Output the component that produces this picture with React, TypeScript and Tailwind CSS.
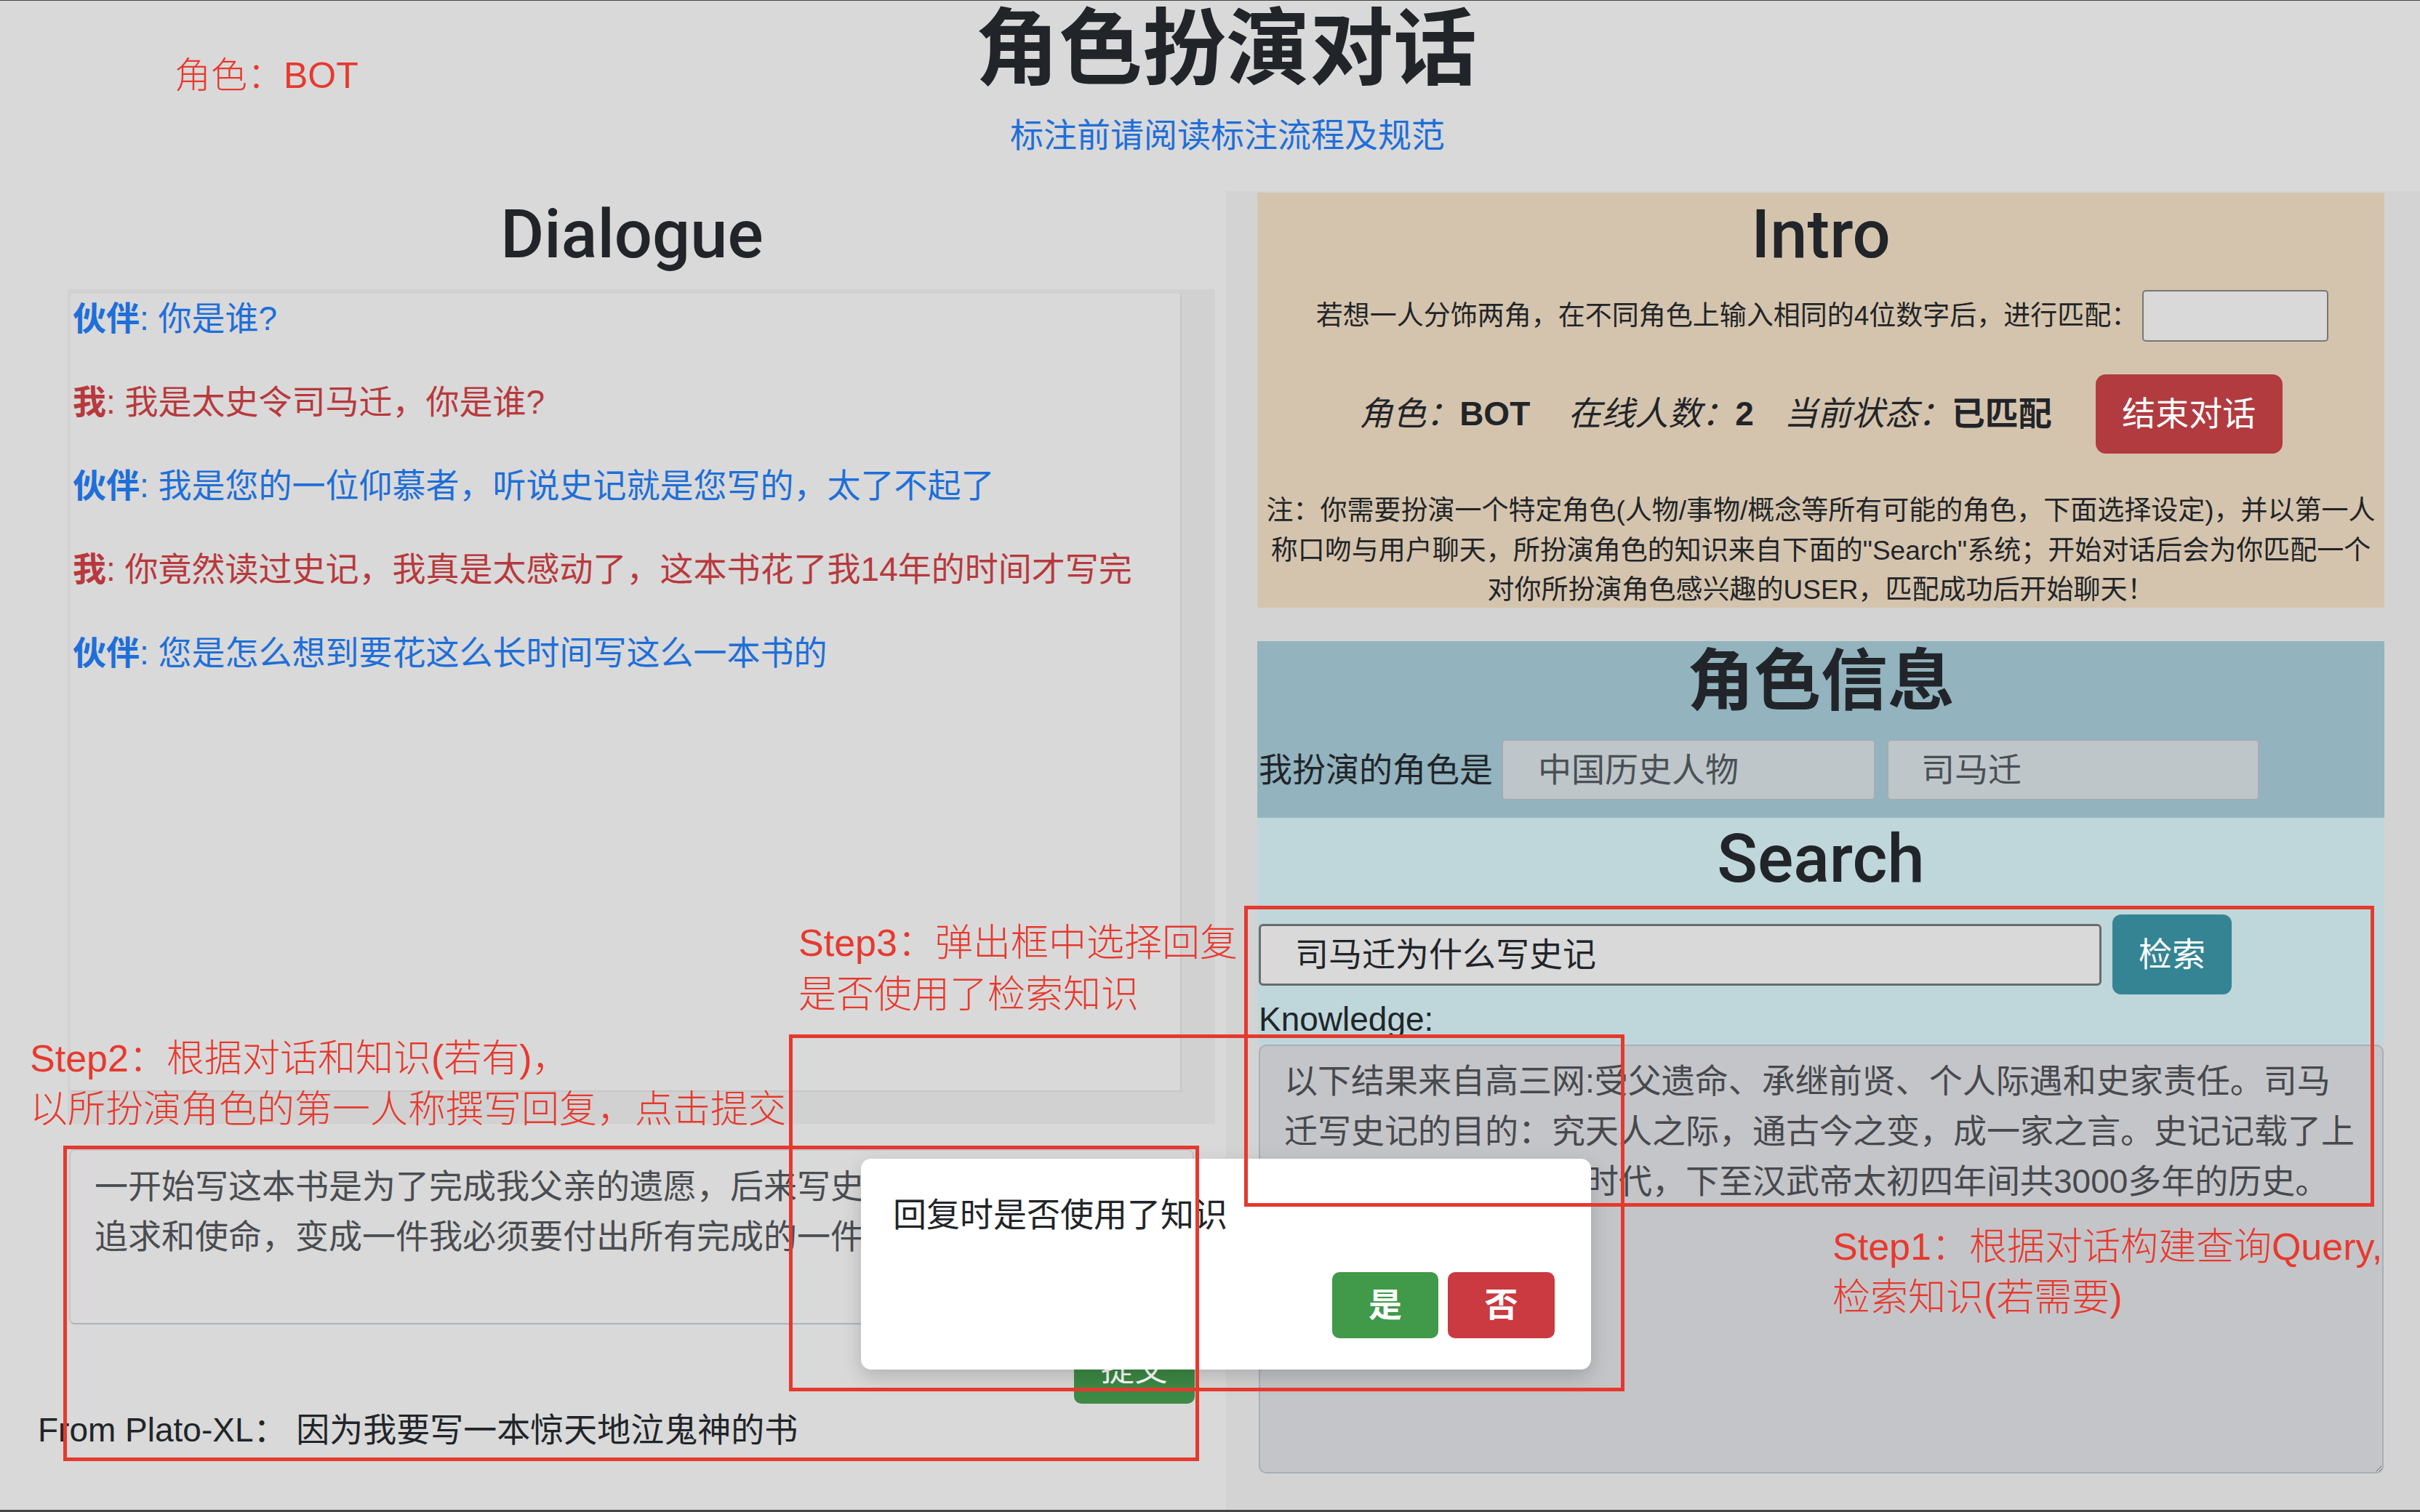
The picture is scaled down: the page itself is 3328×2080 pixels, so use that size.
import React from 'react';

const BASE = "font-['Liberation_Sans','Noto_Sans_CJK_SC',sans-serif]";
const HEAD = "font-['Roboto','Noto_Sans_CJK_SC',sans-serif]";

type Msg = { who: 'partner' | 'me'; text: string };

const messages: Msg[] = [
  { who: 'partner', text: '你是谁?' },
  { who: 'me', text: '我是太史令司马迁，你是谁?' },
  { who: 'partner', text: '我是您的一位仰慕者，听说史记就是您写的，太了不起了' },
  { who: 'me', text: '你竟然读过史记，我真是太感动了，这本书花了我14年的时间才写完' },
  { who: 'partner', text: '您是怎么想到要花这么长时间写这么一本书的' },
];

const knowledge =
  '以下结果来自高三网:受父遗命、承继前贤、个人际遇和史家责任。司马\n迁写史记的目的：究天人之际，通古今之变，成一家之言。史记记载了上\n自上古传说中的黄帝时代，下至汉武帝太初四年间共3000多年的历史。';

const reply =
  '一开始写这本书是为了完成我父亲的遗愿，后来写史记成了我的\n追求和使命，变成一件我必须要付出所有完成的一件事。';

export default function App() {
  return (
    <div
      className={`${BASE} relative w-[3328px] h-[2080px] overflow-hidden bg-[#d9d9d9] text-[#212529] border-t border-b-[3px] border-[#464646]`}
    >
      {/* Header */}
      <header className="h-[262px]">
        <div className="flex">
          <div className="w-[1341px] pl-[240px] pt-[78px]">
            <span className="text-[50px] leading-none font-light text-[#e8392e]">角色：BOT</span>
          </div>
          <h1 className="mt-[9px] text-[115px] leading-none font-bold text-[#212529]">角色扮演对话</h1>
        </div>
        <div className="mt-[34px] pl-[48px] text-center">
          <a className="text-[46px] leading-none text-[#1f6fd9]">标注前请阅读标注流程及规范</a>
        </div>
      </header>

      <div className="flex h-[1814px]">
        {/* Left column: dialogue */}
        <section className="w-[1686px]">
          <h2 className={`${HEAD} mt-[5px] pl-[52px] text-center text-[92px] leading-[110px] font-medium`}>
            Dialogue
          </h2>
          <div className="mt-[20px] ml-[93px] w-[1578px] h-[1148px] bg-[#d1d1d1] pt-[6px] pl-[4px] pr-[46px] pb-[44px]">
            <div className="h-full bg-[#d9d9d9] border-r-2 border-b-2 border-[#c6c6c6] pl-[3px]">
              {messages.map((m, i) => (
                <p
                  key={i}
                  className={`text-[46px] leading-[69px] mb-[46px] ${
                    m.who === 'partner' ? 'text-[#1e6fd9]' : 'text-[#b8393d]'
                  }`}
                >
                  <b>{m.who === 'partner' ? '伙伴' : '我'}</b>: {m.text}
                </p>
              ))}
            </div>
          </div>

          <textarea
            readOnly
            value={reply}
            className="block mt-[35px] ml-[95px] w-[1547px] h-[241px] resize-none bg-[#d9d9d9] border-2 border-[#c3c6c9] border-b-[#adb3b8] rounded-[8px] pt-[15px] px-[33px] text-[46px] leading-[69px] text-[#4a4d51] outline-none"
          />
          <div className="flex justify-end w-[1643px] mt-[13px]">
            <button className="w-[166px] h-[96px] rounded-[10px] bg-[#3d8a45] text-white text-[46px]">提交</button>
          </div>
          <p className="ml-[52px] mt-[2px] text-[46px] leading-[69px]">From Plato-XL：&nbsp;因为我要写一本惊天地泣鬼神的书</p>
        </section>

        {/* Right column */}
        <section className="flex-1 bg-[#d3d3d3] pl-[43px] pr-[49px]">
          {/* Intro */}
          <div className="mt-[2px] h-[571px] bg-[#d5c4ad] text-center">
            <h2 className={`${HEAD} pt-[3px] text-[92px] leading-[110px] font-medium`}>Intro</h2>
            <div className="mt-[21px] flex items-center justify-center gap-[6px] pl-[4px]">
              <span className="text-[37px] leading-[55px]">若想一人分饰两角，在不同角色上输入相同的4位数字后，进行匹配：</span>
              <div className="w-[256px] h-[71px] bg-[#d9d9d9] border-2 border-[#777777] rounded-[5px]" />
            </div>
            <div className="mt-[45px] flex items-center justify-center">
              <span className="text-[46px] leading-[69px]">
                <i>角色：</i>
                <b>BOT</b>
              </span>
              <span className="ml-[52px] text-[46px] leading-[69px]">
                <i>在线人数：</i>
                <b>2</b>
              </span>
              <span className="ml-[42px] text-[46px] leading-[69px]">
                <i>当前状态：</i>
                <b>已匹配</b>
              </span>
              <button className="ml-[60px] w-[257px] h-[109px] rounded-[14px] bg-[#b13b3f] text-white text-[46px]">
                结束对话
              </button>
            </div>
            <p className="mt-[52px] whitespace-nowrap text-[37px] leading-[54.5px]">
              注：你需要扮演一个特定角色(人物/事物/概念等所有可能的角色，下面选择设定)，并以第一人
              <br />
              称口吻与用户聊天，所扮演角色的知识来自下面的"Search"系统；开始对话后会为你匹配一个
              <br />
              对你所扮演角色感兴趣的USER，匹配成功后开始聊天！
            </p>
          </div>

          {/* Role info */}
          <div className="mt-[46px] h-[243px] bg-[#93b3be]">
            <h2 className="text-center text-[92px] leading-[110px] font-bold">角色信息</h2>
            <div className="mt-[25px] flex items-center pl-[2px]">
              <span className="text-[46px] leading-[69px]">我扮演的角色是</span>
              <div className="ml-[12px] w-[514px] h-[84px] flex items-center pl-[48px] bg-[#bec6c9] border-2 border-[#a3acb1] rounded-[6px] text-[46px] text-[#4a5056]">
                中国历史人物
              </div>
              <div className="ml-[16px] w-[512px] h-[84px] flex items-center pl-[45px] bg-[#bec6c9] border-2 border-[#a3acb1] rounded-[6px] text-[46px] text-[#4a5056]">
                司马迁
              </div>
            </div>
          </div>

          {/* Search */}
          <div className="h-[312px] bg-[#bfd7da]">
            <h2 className={`${HEAD} pt-[2px] text-center text-[92px] leading-[110px] font-medium`}>Search</h2>
            <div className="mt-[21px] flex items-center pl-[2px]">
              <div className="w-[1159px] h-[85px] flex items-center pl-[47px] bg-[#d9d9d9] border-[3px] border-[#6b6b6b] rounded-[6px] text-[46px]">
                司马迁为什么写史记
              </div>
              <button className="ml-[15px] w-[164px] h-[110px] rounded-[12px] bg-[#358494] text-white text-[46px]">检索</button>
            </div>
            <div className="pl-[2px] text-[46px] leading-[69px]">Knowledge:</div>
          </div>
          <textarea
            readOnly
            value={knowledge}
            className="block ml-[2px] w-[1547px] h-[590px] bg-[#c4c5c9] border-2 border-[#a8b0b5] rounded-[10px] pt-[14px] px-[33px] text-[46px] leading-[69px] text-[#47494d] outline-none"
          />
        </section>
      </div>

      {/* Modal */}
      <div className="absolute left-[1184px] top-[1593px] w-[1004px] h-[290px] bg-white rounded-[14px] shadow-[0_10px_28px_rgba(0,0,0,0.18)] flex flex-col justify-between pt-[43px] pl-[44px] pr-[50px] pb-[43px]">
        <p className="text-[46px] leading-[69px] text-[#212529]">回复时是否使用了知识</p>
        <div className="flex justify-end gap-[13px]">
          <button className="w-[146px] h-[91px] rounded-[10px] bg-[#41994a] text-white text-[46px] font-bold">是</button>
          <button className="w-[147px] h-[91px] rounded-[10px] bg-[#ca3a40] text-white text-[46px] font-bold">否</button>
        </div>
      </div>

      {/* Annotation boxes */}
      <div className="absolute left-[87px] top-[1575px] w-[1562px] h-[434px] border-[5px] border-[#e5392e]" />
      <div className="absolute left-[1085px] top-[1422px] w-[1149px] h-[491px] border-[5px] border-[#e5392e]" />
      <div className="absolute left-[1711px] top-[1245px] w-[1554px] h-[414px] border-[5px] border-[#e5392e]" />

      {/* Annotation labels */}
      <div className="absolute left-[41px] top-[1420px] text-[52px] leading-[70px] font-light text-[#e8392e] whitespace-nowrap">
        Step2：根据对话和知识(若有)，
        <br />
        以所扮演角色的第一人称撰写回复，点击提交
      </div>
      <div className="absolute left-[1098px] top-[1261px] text-[52px] leading-[71px] font-light text-[#e8392e] whitespace-nowrap">
        Step3：弹出框中选择回复
        <br />
        是否使用了检索知识
      </div>
      <div className="absolute left-[2520px] top-[1679px] text-[52px] leading-[70px] font-light text-[#e8392e] whitespace-nowrap">
        Step1：根据对话构建查询Query,
        <br />
        检索知识(若需要)
      </div>
    </div>
  );
}
